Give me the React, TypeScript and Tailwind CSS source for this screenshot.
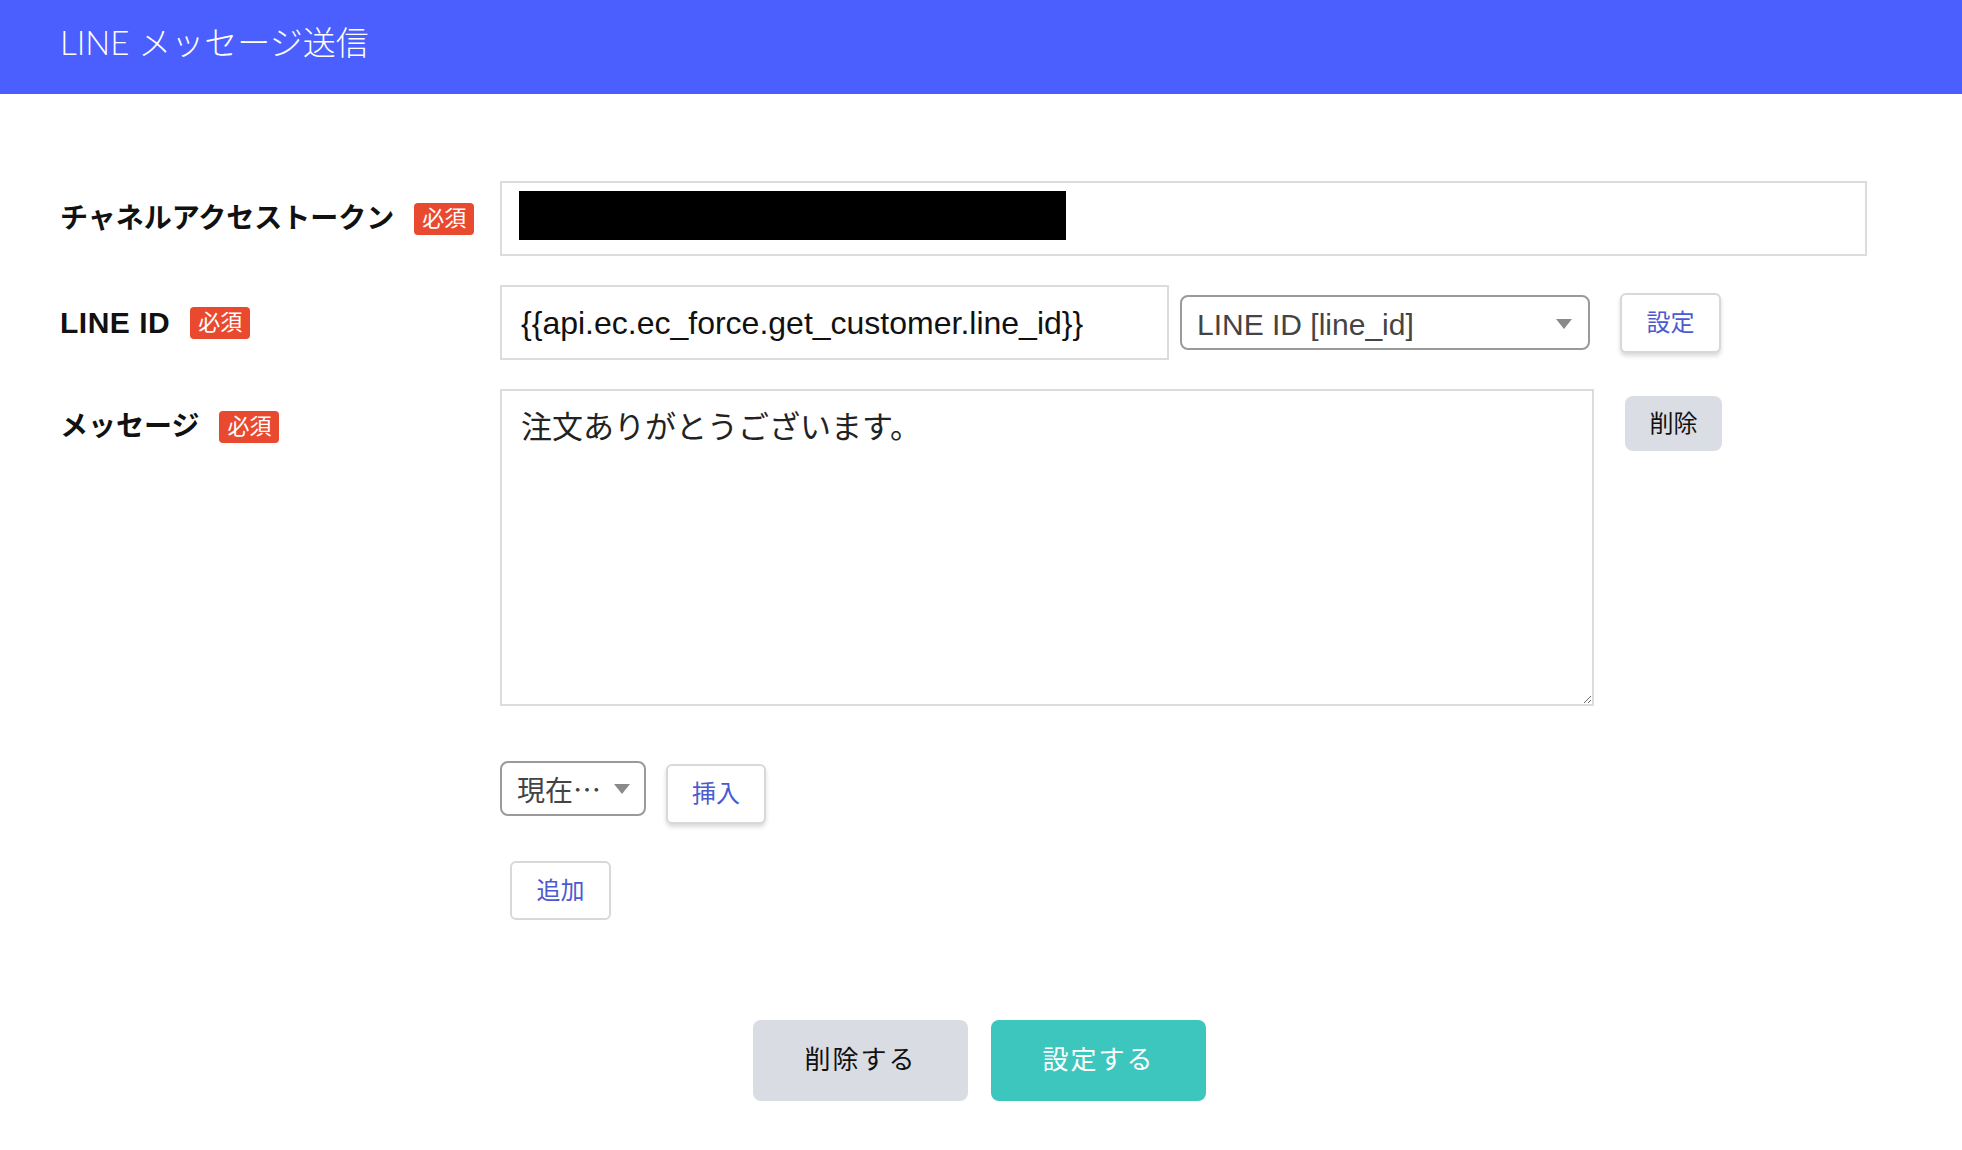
import React from 'react';

const Badge = () => (
  <span className="ml-[20px] inline-flex items-center justify-center w-[60px] h-[32px] rounded-[4px] bg-[#e9492f] text-white text-[22px] leading-none">
    必須
  </span>
);

const Label = ({ text, size = 'text-[28px]' }: { text: string; size?: string }) => (
  <div className="w-[440px] h-[75px] flex items-center shrink-0">
    <span className={`${size} font-bold text-[#111]`}>{text}</span>
    <Badge />
  </div>
);

const Caret = () => (
  <svg width="16" height="10" viewBox="0 0 16 10" className="shrink-0">
    <polygon points="0,0 16,0 8,10" fill="#8a8a8a" />
  </svg>
);

const App = () => {
  return (
    <div className="min-h-screen w-full bg-white font-['Liberation_Sans','Noto_Sans_CJK_JP',sans-serif]">
      {/* Header */}
      <header className="h-[94px] bg-[#4b5efe] flex items-center px-[60px] pb-[8px]">
        <h1 className="text-white text-[33px] font-light font-['Lato','Noto_Sans_CJK_JP',sans-serif]">
          LINE メッセージ送信
        </h1>
      </header>

      <main className="pt-[87px] pl-[60px] pr-[95px]">
        <div className="flex flex-col gap-[29px]">
          {/* Token */}
          <div className="flex items-start">
            <Label text="チャネルアクセストークン" />
            <div className="flex-1 h-[75px] border-2 border-[#dcdcdc] pt-[8px] pl-[17px]">
              <div className="w-[547px] h-[49px] bg-black" />
            </div>
          </div>

          {/* LINE ID */}
          <div className="flex items-center">
            <Label text="LINE ID" size="text-[30px] tracking-[0.5px]" />
            <div className="w-[669px] h-[75px] border-2 border-[#dcdcdc] flex items-center px-[19px] text-[32px] text-[#111]">
              {'{{api.ec.ec_force.get_customer.line_id}}'}
            </div>
            <div className="ml-[11px] w-[410px] h-[55px] border-2 border-[#9a9a9a] rounded-[8px] flex items-center justify-between pl-[15px] pr-[16px] pt-[3px]">
              <span className="text-[30px] text-[#444]">LINE ID [line_id]</span>
              <Caret />
            </div>
            <button className="ml-[30px] w-[101px] h-[60px] border-2 border-[#d8d8d8] rounded-[6px] bg-white shadow-[0_3px_4px_rgba(0,0,0,0.15)] text-[24px] text-[#4b5bcf]">
              設定
            </button>
          </div>

          {/* Message */}
          <div className="flex items-start">
            <Label text="メッセージ" />
            <textarea
              className="w-[1094px] h-[317px] border-2 border-[#dcdcdc] px-[19px] py-[14px] text-[31px] leading-[1.5] text-[#222] outline-none resize"
              defaultValue="注文ありがとうございます。"
            />
            <button className="ml-[31px] mt-[7px] w-[97px] h-[55px] rounded-[8px] bg-[#dadde3] text-[24px] text-[#111]">
              削除
            </button>
          </div>
        </div>

        {/* Insert row */}
        <div className="pl-[440px] mt-[55px] flex items-start">
          <div className="w-[146px] h-[55px] border-2 border-[#9a9a9a] rounded-[8px] flex items-center justify-between pl-[15px] pr-[14px]">
            <span className="text-[28px] text-[#444] font-['Noto_Sans_CJK_JP',sans-serif]">現在…</span>
            <Caret />
          </div>
          <button className="ml-[20px] mt-[3px] w-[100px] h-[60px] border-2 border-[#d8d8d8] rounded-[6px] bg-white shadow-[0_3px_4px_rgba(0,0,0,0.15)] text-[24px] text-[#4b5bcf]">
            挿入
          </button>
        </div>

        <div className="pl-[450px] mt-[37px]">
          <button className="w-[101px] h-[59px] border-2 border-[#d8d8d8] rounded-[6px] bg-white text-[24px] text-[#4b5bcf]">
            追加
          </button>
        </div>
      </main>

      {/* Footer actions */}
      <div className="mt-[100px] flex justify-center gap-[23px] pr-[3px]">
        <button className="w-[215px] h-[81px] rounded-[8px] bg-[#d9dce2] text-[26px] tracking-[2px] text-[#111]">
          削除する
        </button>
        <button className="w-[215px] h-[81px] rounded-[8px] bg-[#3cc6be] text-[26px] tracking-[2px] text-white">
          設定する
        </button>
      </div>
    </div>
  );
};

export default App;
